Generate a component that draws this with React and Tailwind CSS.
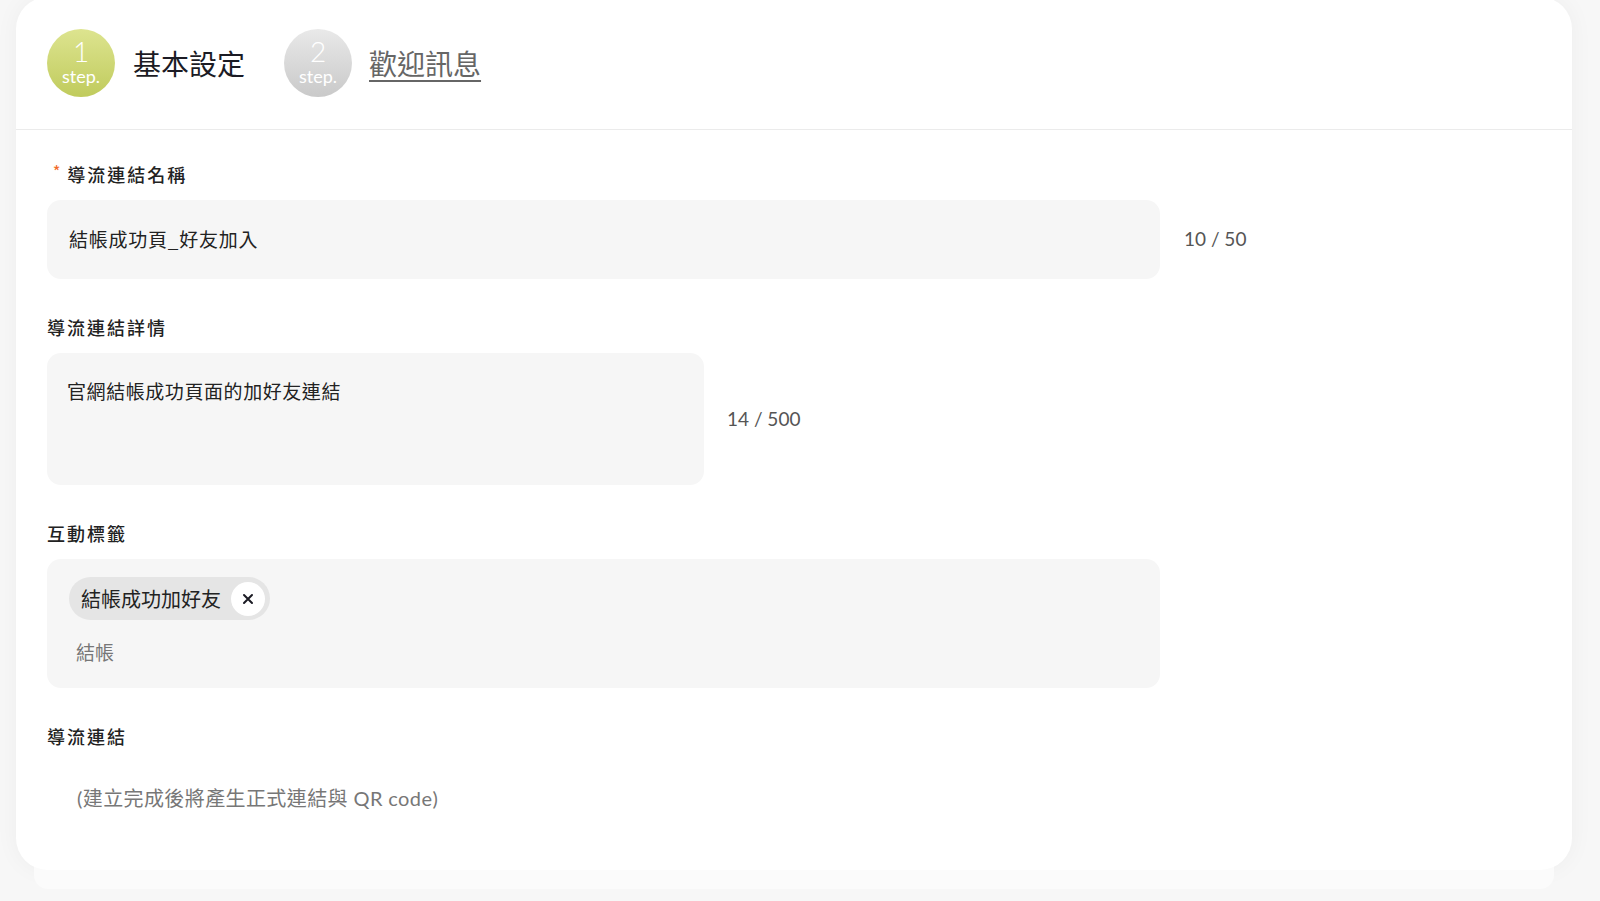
import React from "react";

const cjk = { fontFamily: '"Noto Sans CJK TC", "Noto Sans", sans-serif' };
const latin = { fontFamily: 'Lato, "Noto Sans CJK TC", sans-serif' };

const StepBadge = ({ n, active }) => (
  <div
    className={
      "w-[68px] h-[68px] rounded-full flex flex-col items-center justify-center text-white " +
      (active
        ? "bg-gradient-to-b from-[#dde48f] to-[#c0cb5c]"
        : "bg-gradient-to-b from-[#e9e9e9] to-[#c9c9c9]")
    }
    style={latin}
  >
    <span className="text-[28px] leading-[27px] font-light">{n}</span>
    <span className="text-[18px] leading-[23px]">step.</span>
  </div>
);

const Label = ({ children, required }) => (
  <div className="flex items-center h-[26px] mb-[13px] text-[18px] font-medium tracking-[0.11em] text-[#222]">
    {required && <span className="text-[#f26b2a] text-[15px] ml-[6px] mr-[5px] -mt-[6px]">*</span>}
    <span>{children}</span>
  </div>
);

const Counter = ({ children }) => (
  <span className="text-[19px] text-[#555]" style={latin}>
    {children}
  </span>
);

export default function App() {
  return (
    <div className="min-h-[901px] w-[1600px] bg-[#f7f7f7] overflow-hidden" style={cjk}>
      <div className="pl-[16px] pr-[28px]">
        <div className="-mt-[3px] bg-white rounded-[32px] h-[873px] shadow-[0_37px_0_-18px_#fbfbfb,0_0_24px_rgba(0,0,0,0.045)]">
          {/* steps */}
          <div className="flex items-center h-[133px] pl-[31px] border-b border-[#ebebeb]">
            <StepBadge n="1" active />
            <span className="ml-[18px] text-[28px] text-[#1b1b24]">基本設定</span>
            <div className="ml-[39px]">
              <StepBadge n="2" />
            </div>
            <span className="ml-[17px] text-[28px] text-[#666] underline underline-offset-[5px] decoration-[2px]">
              歡迎訊息
            </span>
          </div>

          {/* form */}
          <div className="pl-[31px] pt-[31px] flex flex-col gap-[35px]">
            <div>
              <Label required>導流連結名稱</Label>
              <div className="flex items-center gap-[24px]">
                <div className="w-[1113px] h-[79px] bg-[#f6f6f6] rounded-[14px] flex items-center px-[22px] text-[19px] text-[#222] tracking-[0.04em]">
                  結帳成功頁_好友加入
                </div>
                <Counter>10 / 50</Counter>
              </div>
            </div>

            <div>
              <Label>導流連結詳情</Label>
              <div className="flex items-center gap-[23px]">
                <div className="w-[657px] h-[132px] bg-[#f6f6f6] rounded-[14px] px-[20px] pt-[24px] text-[19px] leading-[28px] text-[#222] tracking-[0.03em]">
                  官網結帳成功頁面的加好友連結
                </div>
                <Counter>14 / 500</Counter>
              </div>
            </div>

            <div>
              <Label>互動標籤</Label>
              <div className="w-[1113px] h-[129px] bg-[#f6f6f6] rounded-[14px] pl-[22px] pt-[18px] flex flex-col items-start">
                <div className="h-[43px] rounded-full bg-[#e5e5e5] flex items-center pl-[12px] pr-[5px] gap-[10px]">
                  <span className="text-[20px] text-[#222]">結帳成功加好友</span>
                  <span className="w-[34px] h-[34px] rounded-full bg-white flex items-center justify-center">
                    <svg width="12" height="12" viewBox="0 0 12 12">
                      <path d="M2 2L10 10M10 2L2 10" stroke="#1b1b24" strokeWidth="2" strokeLinecap="round" />
                    </svg>
                  </span>
                </div>
                <span className="mt-[18px] ml-[7px] text-[19px] leading-[28px] text-[#777]">結帳</span>
              </div>
            </div>

            <div>
              <Label>導流連結</Label>
              <div className="pl-[30px] pt-[21px] text-[20px] text-[#777] tracking-[0.02em]" style={latin}>
                <span>(</span>
                <span style={cjk}>建立完成後將產生正式連結與</span>
                <span> QR code)</span>
              </div>
            </div>
          </div>
        </div>
      </div>
    </div>
  );
}
